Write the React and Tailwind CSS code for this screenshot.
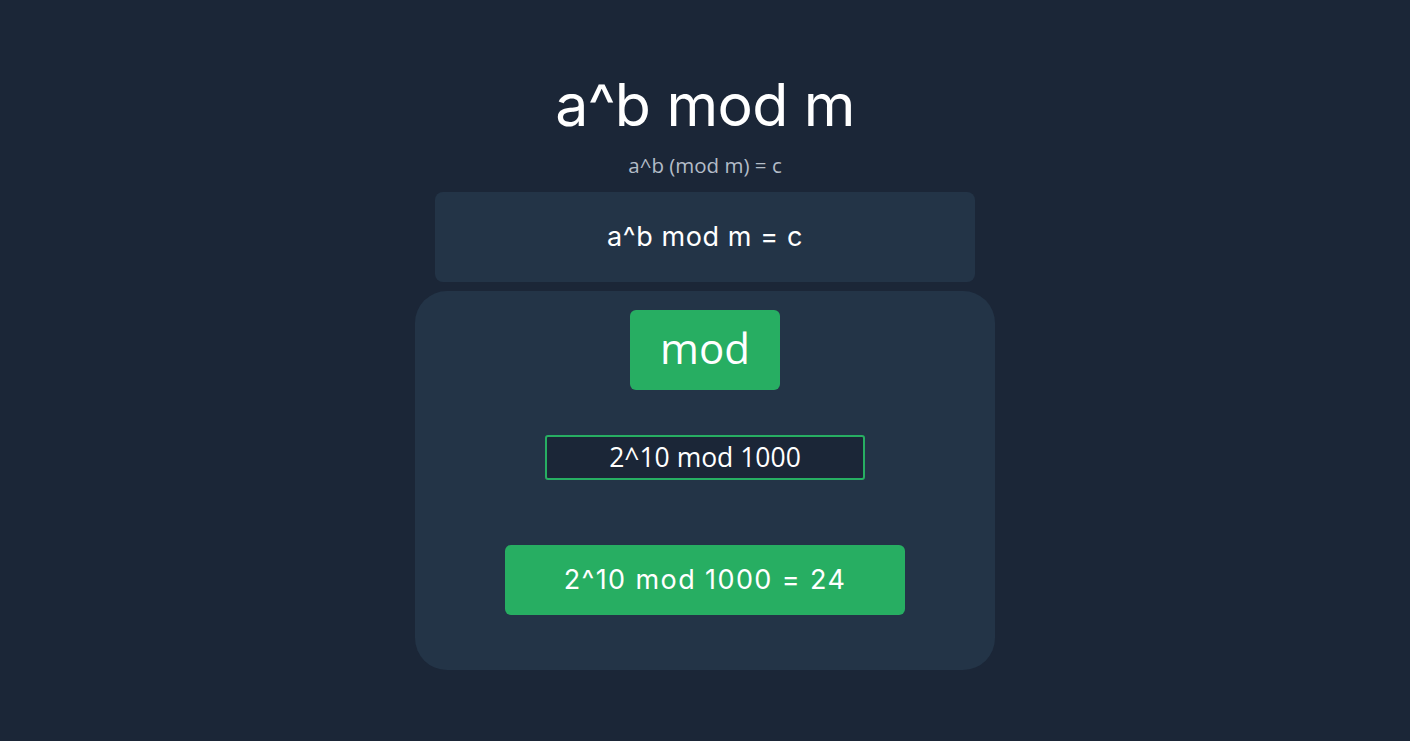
export default function App() {
  return (
    <div className="min-h-screen w-full bg-[#1b2637] flex flex-col items-center text-white">
      <h1 className="mt-[72px] text-[59px] leading-[66px] font-normal font-['Inter',sans-serif] tracking-[-0.6px]">
        a^b mod m
      </h1>
      <p className="mt-[15px] text-[20.5px] leading-[24px] text-[#b3bcc7] font-['Open_Sans',sans-serif]">
        a^b (mod m) = c
      </p>
      <div className="mt-[15px] w-[540px] h-[90px] rounded-[8px] bg-[#233447] flex items-center justify-center">
        <span className="text-[27px] font-['Inter',sans-serif] tracking-[0.6px]">a^b mod m = c</span>
      </div>
      <div className="mt-[9px] w-[580px] h-[379px] rounded-[32px] bg-[#233447] flex flex-col items-center pt-[19px]">
        <button className="w-[150px] h-[80px] rounded-[6px] bg-[#27ae62] text-[42px] leading-[56px] pb-[4px] font-['Open_Sans',sans-serif] font-normal text-white flex items-center justify-center">
          mod
        </button>
        <div className="mt-[45px] w-[320px] h-[45px] border-2 border-[#27ae62] rounded-[3px] bg-[#1b2637] flex items-center justify-center">
          <span className="text-[26.5px] font-['Open_Sans',sans-serif]">2^10 mod 1000</span>
        </div>
        <div className="mt-[65px] w-[400px] h-[70px] rounded-[6px] bg-[#27ae62] flex items-center justify-center">
          <span className="text-[27px] font-['Inter',sans-serif] tracking-[1.4px]">2^10 mod 1000 = 24</span>
        </div>
      </div>
    </div>
  );
}
